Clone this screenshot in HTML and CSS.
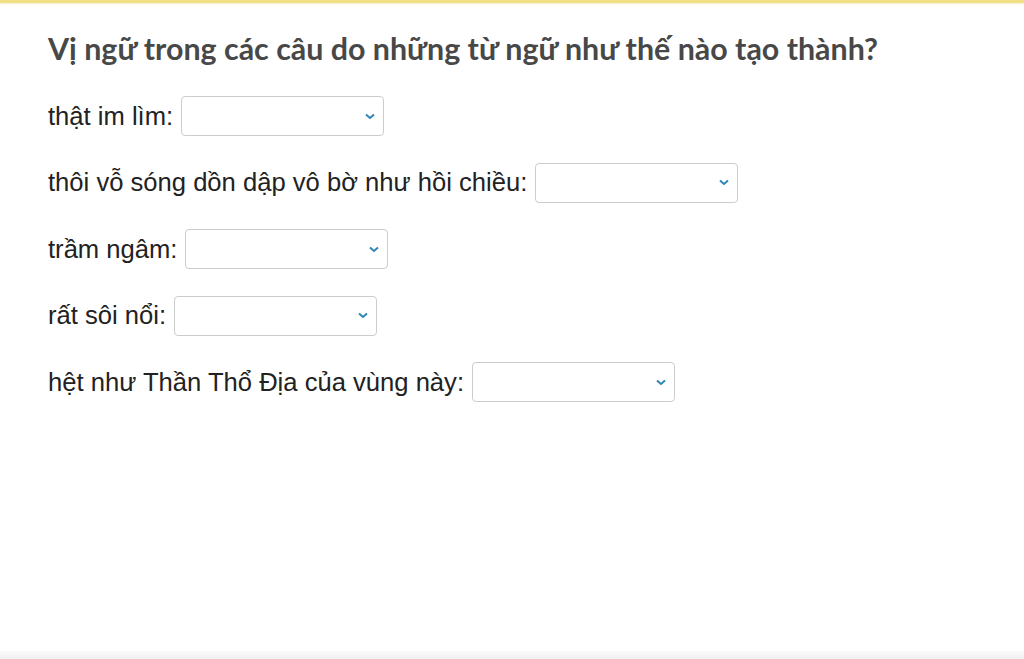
FILE: index.html
```html
<!DOCTYPE html>
<html lang="vi">
<head>
  <meta charset="UTF-8">
  <title>Vị ngữ</title>
  <link rel="stylesheet" href="styles.css">
</head>
<body>
<div class="topbar"></div>
<div class="quiz">
  <h2>Vị ngữ trong các câu do những từ ngữ như thế nào tạo thành?</h2>
  <div class="row"><span>thật im lìm:</span><select><option></option></select></div>
  <div class="row"><span>thôi vỗ sóng dồn dập vô bờ như hồi chiều:</span><select><option></option></select></div>
  <div class="row"><span>trầm ngâm:</span><select><option></option></select></div>
  <div class="row"><span>rất sôi nổi:</span><select><option></option></select></div>
  <div class="row"><span>hệt như Thần Thổ Địa của vùng này:</span><select><option></option></select></div>
</div>
<div class="bottombar"></div>
</body>
</html>
```
FILE: styles.css
```css
html, body {
  height: 100%;
}
body {
  margin: 0;
  background: #fff;
  font-family: "Liberation Sans", Arial, sans-serif;
  color: #222;
  display: flex;
  flex-direction: column;
}
.topbar {
  height: 3px;
  background: #f3df86;
  box-shadow: 0 1px 2px #f7eec4;
}
.quiz {
  flex: 1;
  padding: 16px 48px 0;
}
.quiz h2 {
  font-family: "Lato", sans-serif;
  font-size: 30.4px;
  font-weight: 700;
  color: #484848;
  line-height: 36px;
  margin: 11px 0 30px;
}
.row {
  display: flex;
  align-items: center;
  gap: 8px;
  font-size: 25.6px;
  margin-bottom: 26.5px;
}
.row select {
  width: 203px;
  height: 40px;
  border: 1px solid #ccc;
  border-radius: 4px;
  background: #fff url("data:image/svg+xml,%3Csvg xmlns='http://www.w3.org/2000/svg' width='10' height='7' viewBox='0 0 10 7'%3E%3Cpath d='M1 1.5l4 3.5 4-3.5' fill='none' stroke='%232f85b3' stroke-width='2'/%3E%3C/svg%3E") no-repeat right 8px center;
  appearance: none;
  -webkit-appearance: none;
}
.bottombar {
  height: 8px;
  background: linear-gradient(#fafafa, #f0f0f0);
}
```
